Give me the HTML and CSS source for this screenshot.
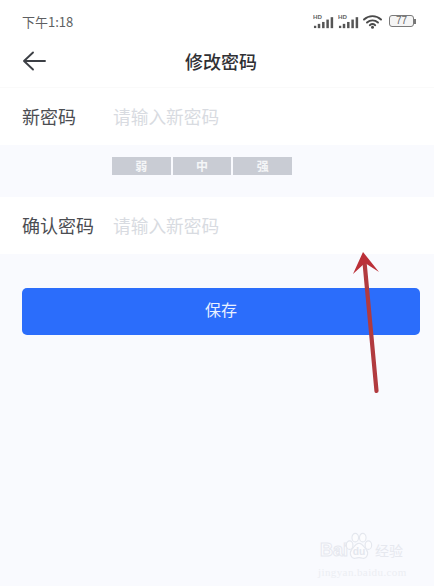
FILE: index.html
```html
<!DOCTYPE html>
<html lang="zh-CN">
<head>
<meta charset="utf-8">
<title>修改密码</title>
<link rel="stylesheet" href="styles.css">
</head>
<body>
<div class="page">
  <header class="top">
    <div class="status">
      <span class="time">下午1:18</span>
      <div class="status-icons">
        <svg class="sig" width="21" height="16" viewBox="0 0 22 16"><text x="0" y="6" class="hd">HD</text><rect x="1" y="13" width="2.4" height="2.4" fill="#555"/><rect x="5" y="11" width="2.6" height="4.5" fill="#555"/><rect x="9.5" y="9" width="2.6" height="6.5" fill="#555"/><rect x="14" y="6.5" width="2.6" height="9" fill="#555"/><rect x="18.5" y="4" width="2.6" height="11.5" fill="#555"/></svg>
        <svg class="sig" width="21" height="16" viewBox="0 0 22 16"><text x="0" y="6" class="hd">HD</text><rect x="1" y="13" width="2.4" height="2.4" fill="#555"/><rect x="5" y="11" width="2.6" height="4.5" fill="#555"/><rect x="9.5" y="9" width="2.6" height="6.5" fill="#555"/><rect x="14" y="6.5" width="2.6" height="9" fill="#555"/><rect x="18.5" y="4" width="2.6" height="11.5" fill="#555"/></svg>
        <svg class="wifi" width="20" height="15" viewBox="0 0 20 15"><g fill="none" stroke="#4a4a4a" stroke-width="1.9" stroke-linecap="round"><path d="M1 5.5C5.8 1 13.2 1 18 5.5"/><path d="M4 8.5C7.200 5.600 11.800 5.600 15 8.500"/><path d="M6.800 11.200C8.500 9.800 10.500 9.800 12.200 11.200"/></g><circle cx="9.5" cy="13.3" r="1.5" fill="#4a4a4a"/></svg>
        <div class="battery"><span class="battery-body">77</span><span class="battery-tip"></span></div>
      </div>
    </div>
    <div class="nav">
      <svg class="back" width="24" height="20" viewBox="0 0 24 20"><path d="M23 10H2M11 1.5L2 10l9 8.5" fill="none" stroke="#3c3f45" stroke-width="1.9" stroke-linecap="round" stroke-linejoin="round"/></svg>
      <h1 class="title">修改密码</h1>
    </div>
  </header>

  <div class="row">
    <span class="label">新密码</span>
    <span class="placeholder">请输入新密码</span>
  </div>
  <div class="strength-band">
    <div class="strength">
      <span class="level">弱</span>
      <span class="level">中</span>
      <span class="level">强</span>
    </div>
  </div>
  <div class="row">
    <span class="label">确认密码</span>
    <span class="placeholder">请输入新密码</span>
  </div>

  <div class="actions">
    <div class="save">保存</div>
  </div>

  <svg class="annotation" width="40" height="150" viewBox="0 0 40 150">
    <path d="M13.500 12L25.500 141" fill="none" stroke="#b13a3f" stroke-width="4.200" stroke-linecap="round"/>
    <path d="M12 2L28 22L14 13L2 24Z" fill="#bb3038"/>
  </svg>

  <div class="watermark">
    <div class="wm-top">
      <span class="wm-bai">Bai</span>
      <svg class="paw" width="30" height="30" viewBox="0 0 32 32"><g fill="#fcfcfe" stroke="#e4e7ee" stroke-width="1.200"><ellipse cx="6" cy="14" rx="3.500" ry="4.500"/><ellipse cx="12" cy="6" rx="3.500" ry="4.500"/><ellipse cx="20" cy="6" rx="3.500" ry="4.500"/><ellipse cx="26" cy="14" rx="3.500" ry="4.500"/><path d="M16 12c4 0 5 4 8 7 3 4 0 10-4 9-3-1-5-1-8 0-4 1-7-5-4-9 3-3 4-7 8-7z"/></g><text x="16" y="25" text-anchor="middle" class="wm-du">du</text></svg>
      <span class="wm-cn">经验</span>
    </div>
    <div class="wm-url">jingyan.baidu.com</div>
  </div>
</div>
</body>
</html>
```

FILE: styles.css
```css
* {
  box-sizing: border-box;
}

html,
body {
  margin: 0;
  padding: 0;
}

body {
  font-family: "Noto Sans CJK SC", "Noto Sans", sans-serif;
  background: #f9fafe;
}

.page {
  position: relative;
  width: 434px;
  height: 586px;
  overflow: hidden;
  background: #f9fafe;
}

.top {
  height: 88px;
  background: #fff;
  border-bottom: 1px solid #fafafa;
}

.status {
  height: 42px;
  padding: 12px 18px 0 22px;
  display: flex;
  justify-content: space-between;
  align-items: flex-start;
}

.time {
  font-size: 13px;
  line-height: 19px;
  color: #5e5f62;
}

.status-icons {
  display: flex;
  align-items: center;
  gap: 4px;
  height: 18px;
}

.hd {
  font-family: "Liberation Sans", sans-serif;
  font-size: 6.5px;
  font-weight: 700;
  fill: #666;
}

.battery {
  display: flex;
  align-items: center;
  margin-left: 2px;
}

.battery-body {
  width: 25px;
  height: 12px;
  border: 1.5px solid #7a7a7a;
  border-radius: 3px;
  background: #f5f5f5;
  font-family: "Liberation Sans", sans-serif;
  font-size: 10px;
  line-height: 9px;
  text-align: center;
  color: #666;
}

.battery-tip {
  width: 2px;
  height: 5px;
  background: #777;
}

.nav {
  position: relative;
  height: 38px;
  padding-left: 8px;
  display: flex;
  align-items: center;
  justify-content: center;
}

.back {
  position: absolute;
  left: 22px;
  top: 9px;
}

.title {
  margin: 0;
  font-size: 18px;
  line-height: 38px;
  font-weight: 500;
  color: #2f3034;
}

.row {
  height: 57px;
  background: #fff;
  padding: 0 0 2px 22px;
  display: flex;
  align-items: center;
}

.label {
  width: 91px;
  font-size: 18px;
  color: #4b4d52;
}

.placeholder {
  font-size: 17.7px;
  color: #d8dbe1;
}

.strength-band {
  height: 52px;
  padding: 12px 0 0 112px;
}

.strength {
  display: flex;
  gap: 2px;
  width: 180px;
  height: 18px;
}

.level {
  flex: 1;
  background: #c9ccd4;
  color: #f4f5f7;
  font-size: 12px;
  line-height: 18px;
  text-align: center;
  font-weight: 700;
}

.actions {
  padding: 34px 14px 0 22px;
}

.save {
  height: 47px;
  border-radius: 5px;
  background: #2b6dfb;
  color: #e8f0ff;
  font-size: 16px;
  line-height: 43px;
  text-align: center;
}

.annotation {
  position: absolute;
  left: 351px;
  top: 250px;
}

.watermark {
  position: absolute;
  left: 318px;
  top: 532px;
  width: 100px;
  color: #fcfcfe;
}

.wm-top {
  display: flex;
  align-items: flex-end;
  height: 30px;
}

.wm-bai {
  margin-left: 2px;
  margin-right: -4px;
  font-family: "Liberation Sans", sans-serif;
  font-size: 18px;
  line-height: 24px;
  font-weight: 700;
  -webkit-text-stroke: 1px #e6e8ef;
}

.wm-du {
  font-family: "Liberation Sans", sans-serif;
  font-size: 11px;
  font-weight: 700;
  fill: #e4e7ee;
}

.wm-cn {
  margin-left: 1px;
  font-size: 14px;
  line-height: 24px;
  color: #e6e8ef;
}

.wm-url {
  margin-top: 3px;
  font-family: "Liberation Serif", serif;
  font-size: 11px;
  line-height: 14px;
  letter-spacing: 0.4px;
  white-space: nowrap;
  color: #eceef3;
}
```
